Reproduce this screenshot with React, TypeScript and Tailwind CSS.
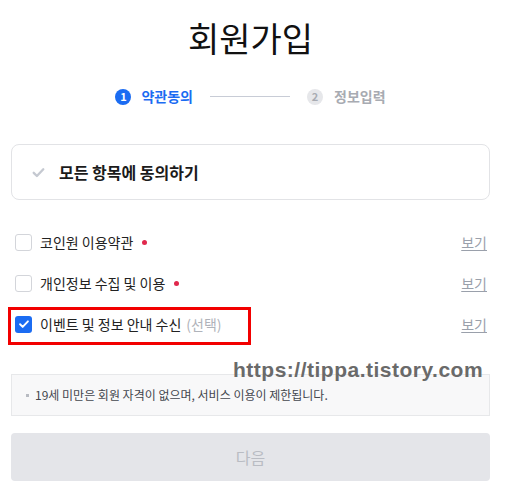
import React, { useState } from 'react';

const FONT = '"Noto Sans CJK KR", "Noto Sans", sans-serif';

type Term = { id: string; label: string; required: boolean };

const TERMS: Term[] = [
  { id: 'service', label: '코인원 이용약관', required: true },
  { id: 'privacy', label: '개인정보 수집 및 이용', required: true },
  { id: 'event', label: '이벤트 및 정보 안내 수신', required: false },
];

const CheckIcon: React.FC<{ className?: string }> = ({ className }) => (
  <svg viewBox="0 0 16 16" className={className} fill="none">
    <path d="M3.5 8.3l3 3 6-6.3" stroke="currentColor" strokeWidth="2.2" strokeLinecap="round" strokeLinejoin="round" />
  </svg>
);

const App: React.FC = () => {
  const [checked, setChecked] = useState<Record<string, boolean>>({ event: true });

  const toggle = (id: string) => setChecked((c) => ({ ...c, [id]: !c[id] }));

  return (
    <div className="relative w-[520px] h-[499px] bg-white overflow-hidden" style={{ fontFamily: FONT }}>
      <div className="ml-[11px] w-[479px]">
        {/* Title */}
        <h1 className="pt-[13px] text-center text-[34px] leading-[50px] font-normal text-[#111]">회원가입</h1>

        {/* Stepper */}
        <div className="mt-[23px] flex items-center justify-center">
          <span className="flex h-[16px] w-[16px] items-center justify-center rounded-full bg-[#1b6cf2] text-[11px] font-bold text-white">1</span>
          <span className="ml-[10px] text-[14px] font-bold text-[#1b6cf2]">약관동의</span>
          <span className="mx-[17px] h-px w-[80px] bg-[#c8ccd6]" />
          <span className="flex h-[16px] w-[16px] items-center justify-center rounded-full bg-[#e6e7ea] text-[11px] font-bold text-[#a8abb2]">2</span>
          <span className="ml-[11px] text-[14px] font-bold text-[#a8abb2]">정보입력</span>
        </div>

        {/* All agree */}
        <button
          type="button"
          className="mt-[37px] flex h-[56px] w-full items-center rounded-[8px] border border-[#e2e3e6] pl-[18px] text-left"
        >
          <CheckIcon className="h-[17px] w-[17px] text-[#c5c9d1]" />
          <span className="ml-[12px] text-[16px] font-bold text-[#1b1b1b]">모든 항목에 동의하기</span>
        </button>

        {/* Terms list */}
        <div className="mt-[33px] flex flex-col gap-[23px]">
          {TERMS.map((t) => (
            <div key={t.id} className="flex h-[18px] items-center pl-[4px]">
              <button
                type="button"
                onClick={() => toggle(t.id)}
                className={
                  checked[t.id]
                    ? 'flex h-[17px] w-[17px] items-center justify-center rounded-[3px] bg-[#1b6cf2] text-white'
                    : 'h-[17px] w-[17px] rounded-[3px] border border-[#d3d5da] bg-white'
                }
              >
                {checked[t.id] && <CheckIcon className="h-[14px] w-[14px]" />}
              </button>
              <span className="ml-[8px] text-[14px] text-[#222]">{t.label}</span>
              {t.required ? (
                <span className="ml-[9px] h-[5px] w-[5px] rounded-full bg-[#e0284c]" />
              ) : (
                <span className="ml-[5px] text-[14px] text-[#b0b3ba]">(선택)</span>
              )}
              <a className="ml-auto mr-[3px] text-[14px] text-[#9aa0ab] underline underline-offset-2">보기</a>
            </div>
          ))}
        </div>

        {/* Notice */}
        <div className="mt-[41px] flex h-[42px] items-center border border-[#e7e8ea] bg-[#f8f8f9] pl-[14px]">
          <span className="mr-[6px] h-[3px] w-[3px] bg-[#b8bbc2]" />
          <span className="text-[12px] text-[#44474e]">19세 미만은 회원 자격이 없으며, 서비스 이용이 제한됩니다.</span>
        </div>

        {/* Next */}
        <button
          type="button"
          disabled
          className="mt-[17px] h-[48px] w-full rounded-[4px] bg-[#e4e5e9] text-[16px] text-[#b9bcc3]"
        >
          다음
        </button>
      </div>

      {/* annotation box */}
      <div className="pointer-events-none absolute left-[8px] top-[307px] h-[38px] w-[243px] border-[3px] border-[#f20000]" />

      {/* watermark */}
      <div
        className="pointer-events-none absolute left-[233px] top-[354px] text-[21px] font-bold tracking-[0.5px] text-[#6a6a6a]"
        style={{ fontFamily: '"Liberation Sans", Arial, sans-serif' }}
      >
        https://tippa.tistory.com
      </div>
    </div>
  );
};

export default App;
